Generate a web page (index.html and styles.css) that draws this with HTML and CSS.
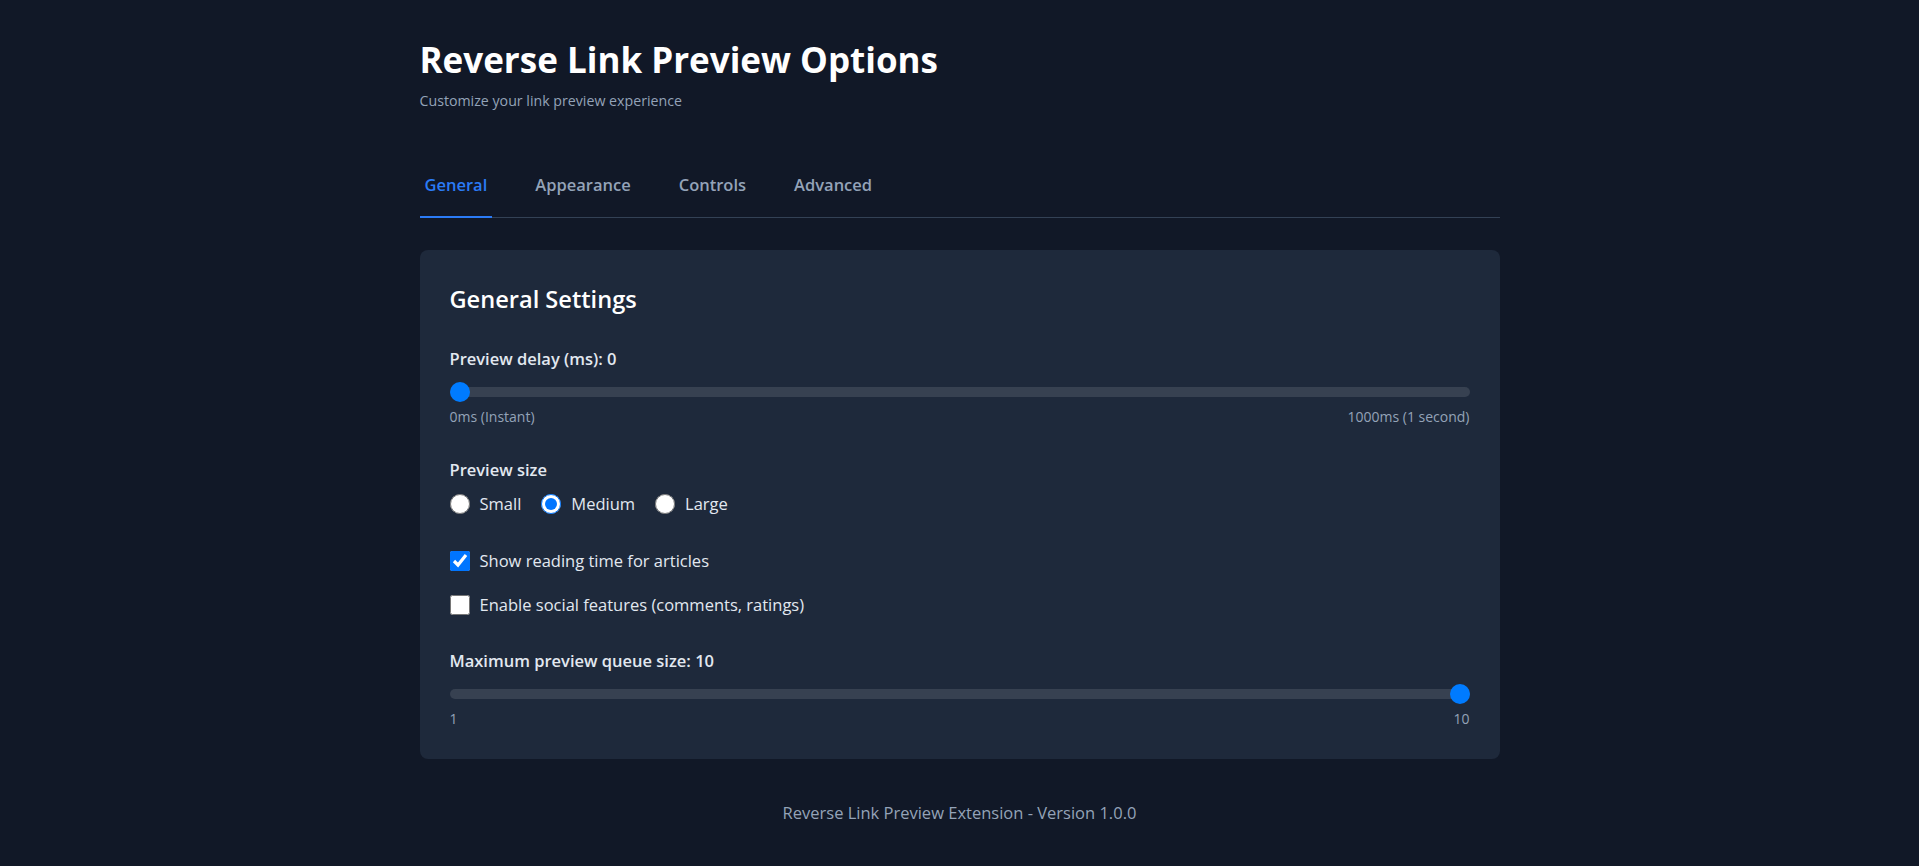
FILE: index.html
```html
<!DOCTYPE html>
<html lang="en">
<head>
<meta charset="utf-8">
<title>Reverse Link Preview Options</title>
<link rel="stylesheet" href="styles.css">
</head>
<body>
<div class="page">
  <header class="header">
    <h1 class="title">Reverse Link Preview Options</h1>
    <p class="subtitle">Customize your link preview experience</p>
  </header>

  <nav class="tabs">
    <button class="tab active">General</button>
    <button class="tab">Appearance</button>
    <button class="tab">Controls</button>
    <button class="tab">Advanced</button>
  </nav>

  <section class="card">
    <h2 class="card-title">General Settings</h2>

    <div class="setting">
      <label class="setting-label" for="delay">Preview delay (ms): 0</label>
      <input id="delay" class="slider" type="range" min="0" max="1000" value="0">
      <div class="range-hints"><span>0ms (Instant)</span><span>1000ms (1 second)</span></div>
    </div>

    <div class="setting setting-size">
      <div class="setting-label">Preview size</div>
      <div class="radio-row">
        <label class="choice"><input type="radio" name="size" value="small"><span>Small</span></label>
        <label class="choice"><input type="radio" name="size" value="medium" checked><span>Medium</span></label>
        <label class="choice"><input type="radio" name="size" value="large"><span>Large</span></label>
      </div>
    </div>

    <div class="checks">
      <label class="choice"><input type="checkbox" checked><span>Show reading time for articles</span></label>
      <label class="choice"><input type="checkbox"><span>Enable social features (comments, ratings)</span></label>
    </div>

    <div class="setting setting-queue">
      <label class="setting-label" for="queue">Maximum preview queue size: 10</label>
      <input id="queue" class="slider" type="range" min="1" max="10" value="10">
      <div class="range-hints"><span>1</span><span>10</span></div>
    </div>
  </section>

  <footer class="footer">Reverse Link Preview Extension - Version 1.0.0</footer>
</div>
</body>
</html>
```

FILE: styles.css
```css
* { box-sizing: border-box; }

html, body {
  margin: 0;
  padding: 0;
  background: #111827;
}

body {
  font-family: "Open Sans", "Noto Sans", sans-serif;
  color: #e2e8f0;
}

.page {
  width: 1080px;
  margin: 0 auto;
  padding-top: 38px;
}

.title {
  margin: 0;
  font-size: 35px;
  line-height: 44px;
  font-weight: 700;
  color: #ffffff;
}

.subtitle {
  margin: 9px 0 0;
  font-size: 14.2px;
  line-height: 20px;
  color: #94a3b8;
}

.tabs {
  display: flex;
  gap: 38px;
  margin-top: 42px;
  border-bottom: 1px solid #334155;
}

.tab {
  background: none;
  border: none;
  border-bottom: 2px solid transparent;
  margin-bottom: -1px;
  padding: 20px 5px 19px;
  font-family: inherit;
  font-size: 16.5px;
  line-height: 24px;
  font-weight: 600;
  color: #94a3b8;
}

.tab.active {
  color: #2b7bf6;
  border-bottom-color: #2b7bf6;
}

.card {
  margin-top: 32px;
  background: #1e293b;
  border-radius: 8px;
  padding: 31px 30px 31px;
}

.card-title {
  margin: 0 0 30px;
  font-size: 23.6px;
  line-height: 36px;
  font-weight: 600;
  color: #ffffff;
}

.setting {
  display: flex;
  flex-direction: column;
}

.setting-label {
  font-size: 16.5px;
  line-height: 24px;
  font-weight: 600;
  color: #e2e8f0;
}

.slider {
  -webkit-appearance: none;
  appearance: none;
  display: block;
  width: 100%;
  height: 10px;
  margin: 16px 0 0;
  background: #374151;
  border-radius: 5px;
  outline: none;
}

.slider::-webkit-slider-thumb {
  -webkit-appearance: none;
  appearance: none;
  width: 20px;
  height: 20px;
  border-radius: 50%;
  background: #007bff;
  border: none;
}

.range-hints {
  display: flex;
  justify-content: space-between;
  margin-top: 11px;
  font-size: 14px;
  line-height: 18px;
  color: #94a3b8;
}

.setting-size {
  margin-top: 32px;
}

.radio-row {
  display: flex;
  gap: 20px;
  margin-top: 10px;
}

.choice {
  display: flex;
  align-items: center;
  gap: 10px;
  font-size: 16.5px;
  line-height: 24px;
  color: #e2e8f0;
}

.choice input {
  margin: 0;
  width: 20px;
  height: 20px;
}

.checks {
  display: flex;
  flex-direction: column;
  gap: 20px;
  margin-top: 33px;
}

.setting-queue {
  margin-top: 32px;
}

.footer {
  margin-top: 42px;
  text-align: center;
  font-size: 16.5px;
  line-height: 24px;
  color: #94a3b8;
}
```
